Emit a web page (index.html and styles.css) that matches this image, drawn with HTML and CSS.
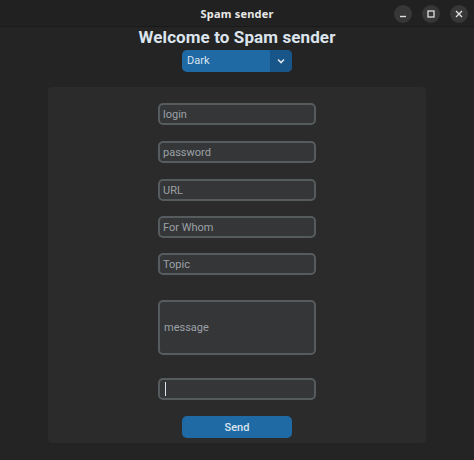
FILE: index.html
```html
<!DOCTYPE html>
<html>
<head>
<meta charset="utf-8">
<link rel="stylesheet" href="styles.css">
</head>
<body>
<div class="window">
  <header class="titlebar">
    <span class="wtitle">Spam sender</span>
    <div class="wbtns">
      <span class="wbtn"><svg width="16" height="16" viewBox="0 0 16 16"><path d="M5 10.5h6" stroke="#e0e0e0" stroke-width="1.4" fill="none"/></svg></span>
      <span class="wbtn"><svg width="16" height="16" viewBox="0 0 16 16"><rect x="5" y="5" width="6" height="6" stroke="#e0e0e0" stroke-width="1.3" fill="none"/></svg></span>
      <span class="wbtn"><svg width="16" height="16" viewBox="0 0 16 16"><path d="M5 5l6 6M11 5l-6 6" stroke="#e0e0e0" stroke-width="1.4" fill="none"/></svg></span>
    </div>
  </header>
  <main class="main">
    <h1 class="heading">Welcome to Spam sender</h1>
    <div class="optmenu">
      <span class="optlabel">Dark</span>
      <span class="optarrow"><svg width="10" height="8" viewBox="0 0 10 8"><path d="M2 2.5l3 3 3-3" stroke="#dce4ee" stroke-width="1.6" fill="none"/></svg></span>
    </div>
    <section class="frame">
      <div class="entry"><span class="ph">login</span></div>
      <div class="entry"><span class="ph">password</span></div>
      <div class="entry"><span class="ph">URL</span></div>
      <div class="entry"><span class="ph">For Whom</span></div>
      <div class="entry"><span class="ph">Topic</span></div>
      <div class="textbox"><span class="ph">message</span></div>
      <div class="entry entry-focus"><span class="caret"></span></div>
      <button class="send">Send</button>
    </section>
  </main>
</div>
</body>
</html>
```
FILE: styles.css
```css
* { box-sizing: border-box; }
html, body {
  margin: 0;
  padding: 0;
  background: #242424;
}
body {
  width: 474px;
  height: 460px;
  overflow: hidden;
  font-family: Roboto, "Liberation Sans", sans-serif;
}
.window {
  width: 474px;
  height: 460px;
  background: #242424;
}
.titlebar {
  height: 27px;
  background: #212121;
  border-bottom: 1px solid #1a1a1a;
  display: flex;
  align-items: center;
  justify-content: center;
  position: relative;
}
.wtitle {
  color: #e8e8e8;
  font-family: "Noto Sans", "DejaVu Sans", sans-serif;
  font-weight: 700;
  font-size: 11px;
  letter-spacing: 0.2px;
}
.wbtns {
  position: absolute;
  right: 6px;
  top: 5px;
  display: flex;
  gap: 10px;
}
.wbtn {
  width: 18px;
  height: 18px;
  border-radius: 50%;
  background: #373737;
  display: flex;
  align-items: center;
  justify-content: center;
}
.main {
  display: flex;
  flex-direction: column;
  align-items: center;
}
.heading {
  margin: 0;
  font-size: 17px;
  line-height: 21px;
  font-weight: 700;
  color: #dce4ee;
  letter-spacing: 0.1px;
}
.optmenu {
  margin-top: 2px;
  width: 110px;
  height: 22px;
  border-radius: 5px;
  background: #1f6aa5;
  display: flex;
  overflow: hidden;
}
.optlabel {
  flex: 1;
  color: #dce4ee;
  font-size: 11px;
  line-height: 22px;
  padding-left: 5px;
}
.optarrow {
  width: 22px;
  background: #18568a;
  display: flex;
  align-items: center;
  justify-content: center;
}
.frame {
  margin-top: 15px;
  width: 378px;
  height: 356px;
  background: #2b2b2b;
  border-radius: 4px;
  display: flex;
  flex-direction: column;
  align-items: center;
  padding-top: 16px;
}
.entry {
  width: 158px;
  height: 22px;
  background: #343638;
  border: 2px solid #565b5e;
  border-radius: 5px;
  display: flex;
  align-items: center;
  padding-left: 3px;
  margin-bottom: 16px;
  flex-shrink: 0;
}
.entry:nth-child(3),
.entry:nth-child(4) { margin-bottom: 15px; }
.entry:nth-child(5) { margin-bottom: 25px; }
.ph {
  color: #9da1a6;
  font-size: 11px;
}
.textbox {
  width: 158px;
  height: 55px;
  background: #343638;
  border: 2px solid #565b5e;
  border-radius: 5px;
  display: flex;
  align-items: center;
  padding-left: 4px;
  margin-bottom: 23px;
  flex-shrink: 0;
}
.caret {
  width: 1px;
  height: 14px;
  background: #dce4ee;
  margin-left: 2px;
}
.send {
  width: 110px;
  height: 22px;
  border: 0;
  border-radius: 5px;
  background: #1f6aa5;
  color: #dce4ee;
  font-family: Roboto, "Liberation Sans", sans-serif;
  font-size: 11px;
  font-weight: 500;
  padding: 0;
}
```
